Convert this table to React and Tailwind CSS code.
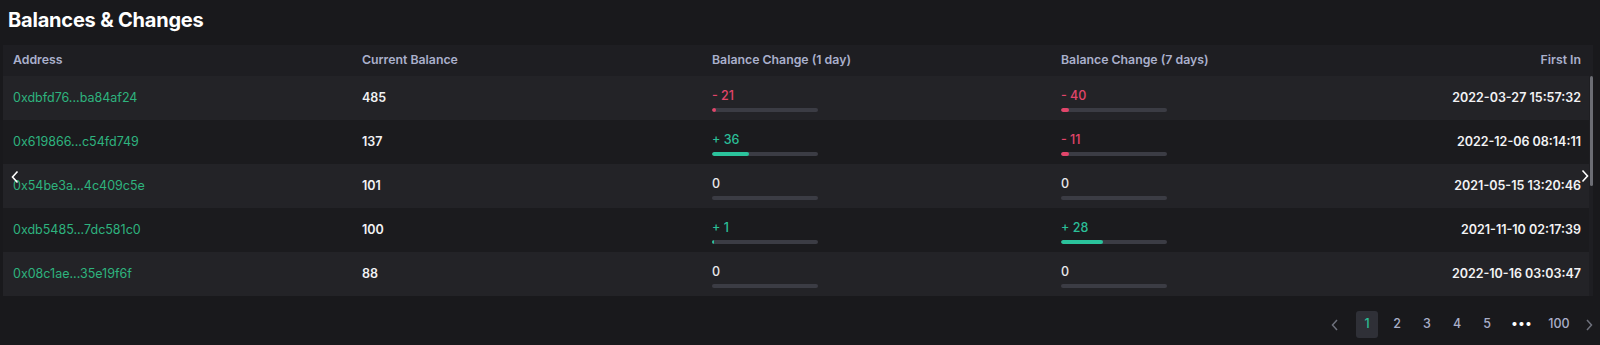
import React from "react";

const rows = [
  { addr: "0xdbfd76...ba84af24", bal: "485", d1: { s: "-", v: "21", w: 4 }, d7: { s: "-", v: "40", w: 8 }, date: "2022-03-27 15:57:32" },
  { addr: "0x619866...c54fd749", bal: "137", d1: { s: "+", v: "36", w: 37 }, d7: { s: "-", v: "11", w: 8 }, date: "2022-12-06 08:14:11" },
  { addr: "0x54be3a...4c409c5e", bal: "101", d1: { s: "0", v: "", w: 0 }, d7: { s: "0", v: "", w: 0 }, date: "2021-05-15 13:20:46" },
  { addr: "0xdb5485...7dc581c0", bal: "100", d1: { s: "+", v: "1", w: 2 }, d7: { s: "+", v: "28", w: 42 }, date: "2021-11-10 02:17:39" },
  { addr: "0x08c1ae...35e19f6f", bal: "88", d1: { s: "0", v: "", w: 0 }, d7: { s: "0", v: "", w: 0 }, date: "2022-10-16 03:03:47" },
];

function Change({ c }) {
  const neg = c.s === "-";
  const pos = c.s === "+";
  const color = neg ? "text-[#e2456a]" : pos ? "text-[#2bbf98]" : "text-[#e8e8ea]";
  const fill = neg ? "bg-[#e2456a]" : "bg-[#2bc39c]";
  return (
    <div className="flex flex-col pt-[4px]">
      <div className={`text-[12.5px] font-medium leading-[16px] ${color}`}>
        {c.s === "0" ? "0" : `${c.s} ${c.v}`}
      </div>
      <div className="mt-[4px] w-[106px] h-[4px] rounded-full bg-[#3b3c44] overflow-hidden">
        {c.w > 0 && <div className={`h-full rounded-full ${fill}`} style={{ width: c.w }} />}
      </div>
    </div>
  );
}

export default function App() {
  return (
    <div className="w-[1600px] h-[345px] bg-[#19191c] font-['Inter',sans-serif] overflow-hidden">
      <div className="h-[45px] flex items-center pl-[8px] pb-[6px]">
        <h1 className="text-[20px] font-bold text-white tracking-[-0.2px]">Balances &amp; Changes</h1>
      </div>
      <div className="relative ml-[3px] w-[1590px]">
        <div className="grid grid-cols-[349px_350px_349px_350px_1fr] h-[31px] items-center bg-[#1e1e22] text-[12.3px] font-semibold text-[#aab0cc]">
          <div className="pl-[10px]">Address</div>
          <div className="pl-[10px]">Current Balance</div>
          <div className="pl-[10px]">Balance Change (1 day)</div>
          <div className="pl-[10px]">Balance Change (7 days)</div>
          <div className="text-right pr-[12px]">First In</div>
        </div>
        <div className="relative">
          {rows.map((r, i) => (
            <div
              key={i}
              className={`grid grid-cols-[349px_350px_349px_350px_1fr] h-[44px] items-center ${i % 2 === 0 ? "bg-[#232327]" : "bg-[#1b1b1e]"}`}
            >
              <div className="pl-[10px] text-[12.5px] text-[#2eb37e]">{r.addr}</div>
              <div className="pl-[10px] text-[12.5px] font-semibold text-[#f2f2f4]">{r.bal}</div>
              <div className="pl-[10px]"><Change c={r.d1} /></div>
              <div className="pl-[10px]"><Change c={r.d7} /></div>
              <div className="text-right pr-[12px] text-[12.5px] font-semibold text-[#f2f2f4]">{r.date}</div>
            </div>
          ))}
          <div className="absolute right-0 top-0 bottom-0 w-[4px] bg-[#1e1e22]" />
          <div className="absolute right-[0px] top-[0px] h-[110px] w-[3px] rounded-full bg-[#6c6d74]" />
          <svg className="absolute left-[7px] top-[94px]" width="10" height="14" viewBox="0 0 10 14">
            <path d="M7.5 1.5 L2.5 7 L7.5 12.5" fill="none" stroke="#ffffff" strokeWidth="1.6" />
          </svg>
          <svg className="absolute right-[3px] top-[93px]" width="10" height="14" viewBox="0 0 10 14">
            <path d="M2.5 1.5 L7.5 7 L2.5 12.5" fill="none" stroke="#ffffff" strokeWidth="1.6" />
          </svg>
        </div>
      </div>
      <div className="flex justify-end items-center mt-[15px] pr-[2px] h-[27px] text-[12.5px] font-medium text-[#a9afc9]">
        <svg width="10" height="14" viewBox="0 0 10 14" className="mr-[16px]">
          <path d="M7 2 L2.5 7 L7 12" fill="none" stroke="#6e717c" strokeWidth="1.5" />
        </svg>
        <div className="w-[22px] h-[27px] rounded-[3px] bg-[#2f3037] text-[#2bbf98] flex items-center justify-center">1</div>
        <div className="w-[30px] text-center ml-[4px]">2</div>
        <div className="w-[30px] text-center">3</div>
        <div className="w-[30px] text-center">4</div>
        <div className="w-[30px] text-center">5</div>
        <div className="w-[40px] text-center text-white font-bold tracking-[1px] leading-none">•••</div>
        <div className="w-[34px] text-center">100</div>
        <svg width="10" height="14" viewBox="0 0 10 14" className="ml-[8px] mr-[4px]">
          <path d="M3 2 L7.5 7 L3 12" fill="none" stroke="#6e717c" strokeWidth="1.5" />
        </svg>
      </div>
    </div>
  );
}
